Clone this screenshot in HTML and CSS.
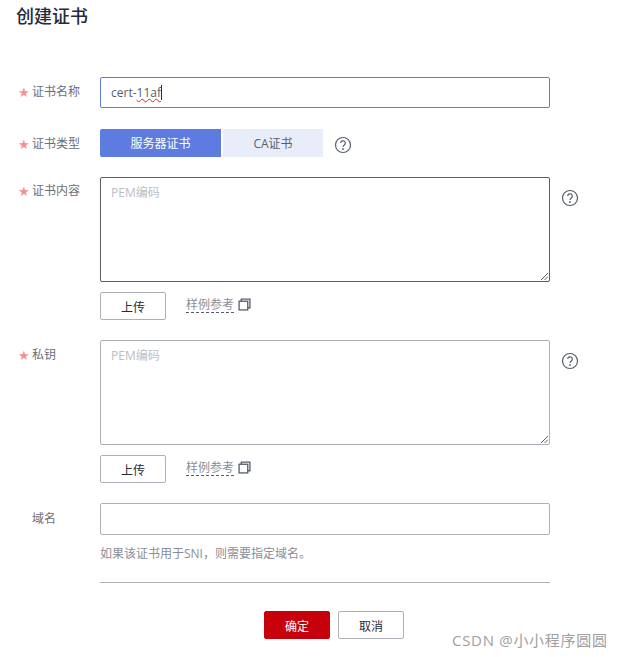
FILE: index.html
```html
<!DOCTYPE html>
<html lang="zh-CN">
  <head>
    <meta charset="UTF-8" />
    <meta name="viewport" content="width=device-width, initial-scale=1.0" />
    <title>创建证书</title>
    <link rel="stylesheet" href="styles.css">
  </head>
  <body>
    <div class="page">
      <h1 class="page-title">创建证书</h1>

      <div class="form-row row-name">
        <label class="form-label required">证书名称</label>
        <div class="form-field">
          <div class="text-input focused">cert-<span class="squiggle">11af</span><span class="caret"></span></div>
        </div>
      </div>

      <div class="form-row row-type">
        <label class="form-label required">证书类型</label>
        <div class="form-field type-field">
          <div class="segment active">服务器证书</div>
          <div class="segment">CA证书</div>
          <svg class="help-icon help-inline" viewBox="0 0 18 18"><circle cx="9" cy="9" r="7.5"/><path d="M6.7 7.1a2.3 2.3 0 1 1 3.6 1.9c-.9.6-1.3 1-1.3 2"/><circle class="dot" cx="9" cy="13" r=".9"/></svg>
        </div>
      </div>

      <div class="form-row row-cert">
        <label class="form-label required label-area">证书内容</label>
        <div class="form-field">
          <div class="text-area dark">
            PEM编码
            <svg class="grip" viewBox="0 0 8 8"><path d="M1 8 8 1M4.5 8 8 4.5"/></svg>
          </div>
          <div class="upload-row">
            <button class="btn">上传</button>
            <span class="sample-link">样例参考</span>
            <svg class="copy-icon" viewBox="0 0 12 12"><path d="M3 3V1h8v8H9"/><rect x="1" y="3" width="8" height="8"/></svg>
          </div>
        </div>
        <svg class="help-icon help-side" viewBox="0 0 18 18"><circle cx="9" cy="9" r="7.5"/><path d="M6.7 7.1a2.3 2.3 0 1 1 3.6 1.9c-.9.6-1.3 1-1.3 2"/><circle class="dot" cx="9" cy="13" r=".9"/></svg>
      </div>

      <div class="form-row row-key">
        <label class="form-label required label-key">私钥</label>
        <div class="form-field">
          <div class="text-area">
            PEM编码
            <svg class="grip" viewBox="0 0 8 8"><path d="M1 8 8 1M4.5 8 8 4.5"/></svg>
          </div>
          <div class="upload-row">
            <button class="btn">上传</button>
            <span class="sample-link">样例参考</span>
            <svg class="copy-icon" viewBox="0 0 12 12"><path d="M3 3V1h8v8H9"/><rect x="1" y="3" width="8" height="8"/></svg>
          </div>
        </div>
        <svg class="help-icon help-side" viewBox="0 0 18 18"><circle cx="9" cy="9" r="7.5"/><path d="M6.7 7.1a2.3 2.3 0 1 1 3.6 1.9c-.9.6-1.3 1-1.3 2"/><circle class="dot" cx="9" cy="13" r=".9"/></svg>
      </div>

      <div class="form-row row-domain">
        <label class="form-label label-domain">域名</label>
        <div class="form-field">
          <div class="text-input"></div>
          <p class="hint">如果该证书用于SNI，则需要指定域名。</p>
        </div>
      </div>

      <hr class="divider" />

      <div class="actions">
        <button class="btn btn-primary">确定</button>
        <button class="btn">取消</button>
      </div>
    </div>

    <div class="watermark">CSDN @小小程序圆圆</div>
  </body>
</html>
```

FILE: styles.css
```css
* {
  margin: 0;
  padding: 0;
  box-sizing: border-box;
}

body {
  font-family: "Open Sans", "Noto Sans CJK SC", sans-serif;
  font-size: 12px;
  color: #6a6f7c;
  background: white;
  height: 657px;
  overflow: hidden;
  position: relative;
}

.page {
  width: 622px;
}

.page-title {
  font-size: 18px;
  line-height: 24px;
  font-weight: 500;
  color: #252b3a;
  padding: 4px 0 0 16px;
  margin-bottom: 49px;
}

.form-row {
  display: flex;
  align-items: flex-start;
}

.row-name {
  margin-bottom: 21px;
}

.row-type {
  margin-bottom: 19px;
}

.row-cert,
.row-key {
  margin-bottom: 20px;
}

.form-label {
  width: 100px;
  flex: none;
  padding-left: 32px;
  padding-top: 1px;
  line-height: 28px;
  position: relative;
}

.required::before {
  content: "★";
  position: absolute;
  left: 18px;
  top: 2px;
  font-family: "DejaVu Sans", sans-serif;
  font-size: 13px;
  color: #f78f8b;
}

.label-area {
  line-height: 26px;
}

.label-key {
  line-height: 28px;
}

.label-domain {
  padding-top: 2px;
}

.form-field {
  width: 450px;
  flex: none;
}

.type-field {
  display: flex;
  align-items: center;
}

.text-input {
  height: 32px;
  border: 1px solid #adb0b8;
  border-radius: 2px;
  padding: 0 10px;
  line-height: 30px;
  font-size: 12px;
  color: #575d6c;
}

.text-input.focused {
  height: 31px;
  line-height: 29px;
  border-color: #5e7ce0;
}

.squiggle {
  text-decoration: underline wavy #e0262a 1px;
  text-underline-offset: 1px;
}

.caret {
  display: inline-block;
  width: 1px;
  height: 15px;
  background: #252b3a;
  vertical-align: -3px;
}

.segment {
  width: 100px;
  height: 28px;
  line-height: 29px;
  text-align: center;
  background: #e9edfa;
  color: #575d6c;
}

.segment.active {
  width: 121px;
  margin-right: 2px;
  background: #5e7ce0;
  color: white;
  border-radius: 2px 0 0 2px;
}

.text-area {
  height: 105px;
  border: 1px solid #adb0b8;
  border-radius: 2px;
  padding: 6px 10px;
  line-height: 18px;
  color: #bbbec5;
  position: relative;
}

.text-area.dark {
  border-color: #575d6c;
}

.grip {
  position: absolute;
  right: 1px;
  bottom: 1px;
  width: 8px;
  height: 8px;
  fill: none;
  stroke: #575d6c;
  stroke-width: 1;
}

.upload-row {
  display: flex;
  align-items: center;
  margin-top: 10px;
}

.btn {
  width: 66px;
  height: 28px;
  padding-top: 1px;
  border: 1px solid #adb0b8;
  border-radius: 2px;
  background: white;
  color: #252b3a;
  font-family: inherit;
  font-size: 12px;
}

.btn-primary {
  background: #c7000b;
  border-color: #c7000b;
  color: white;
}

.sample-link {
  margin-left: 20px;
  margin-bottom: 2px;
  padding-top: 1px;
  color: #8a8e99;
  line-height: 14px;
  border-bottom: 1px dashed #575d6c;
}

.copy-icon {
  width: 13px;
  height: 13px;
  margin-left: 4px;
  margin-bottom: 4px;
  fill: none;
  stroke: #575d6c;
  stroke-width: 1.2;
}

.help-icon {
  width: 18px;
  height: 18px;
  flex: none;
  fill: none;
  stroke: #575d6c;
  stroke-width: 1.2;
}

.help-icon .dot {
  fill: #575d6c;
  stroke: none;
}

.help-inline {
  margin-left: 11px;
  margin-top: 3px;
}

.help-side {
  margin-left: 11px;
  margin-top: 12px;
}

.hint {
  margin-top: 10px;
  line-height: 18px;
  color: #8a8e99;
}

.divider {
  border: none;
  border-top: 1px solid #adb0b8;
  width: 450px;
  margin: 19px 0 28px 100px;
}

.actions {
  display: flex;
  gap: 8px;
  padding-left: 264px;
}

/* site watermark pasted over the screenshot */
.watermark {
  position: absolute;
  left: 452px;
  top: 630px;
  font-size: 15px;
  line-height: 20px;
  letter-spacing: 0.7px;
  color: #a0a0a0;
}
```
